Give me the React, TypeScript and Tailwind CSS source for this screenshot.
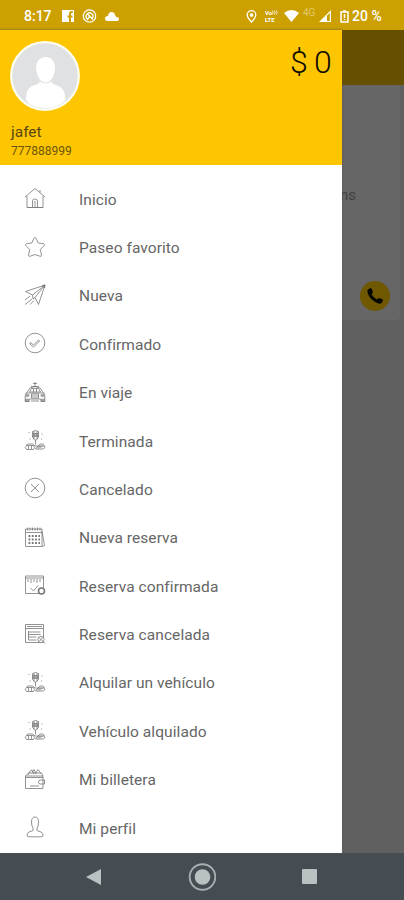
import type { ReactNode } from "react";

const home = (
  <>
    <path d="M1 10 11 1.5 21 10M3 9v11.5h16V9M8.500 20v-6q0-2 2.500-2t2.500 2v6M11 14v6" />
    <path d="M16 3v2.500M3 20.500h16" />
  </>
);
const star = (
  <path d="M11 1.5q.8 0 1.300 1.200L14.200 7l5.400.7q1.800.6.6 1.900l-3.900 3.900 1.200 5.700q-.1 1.700-1.700 1L11 18.500l-4.800 1.700q-1.600.7-1.700-1l1.200-5.700-3.900-3.900Q.6 8.300 2.400 7.700L7.800 7l1.900-4.300Q10.200 1.500 11 1.500z" />
);
const plane = (
  <>
    <path d="M21 1 1.500 7.500 8.500 11 21 1 14.500 20.500 11 13.500 21 1M8.500 11l.5 4 2-1.500M1 16l5-4M1 20.500l7-5.500M6 20.500l4-4" />
    <path d="M18.500 1.500 21 1l-.5 3z" fill="currentColor" />
  </>
);
const confirmed = (
  <>
    <circle cx="11" cy="11" r="9.800" />
    <path d="m6.500 10.500 3 2.500 5-5 1.200 1-6.200 6L5.800 12z" />
  </>
);
const taxi = (
  <>
    <path d="M11 1v4M9 2.500h4M7 5.500h8M2.500 12 6 7q5-3 10 0l3.500 5M5.500 11h11l-2-3.500h-7zM2 12h18l.8 3v5.500h-4V18H5.200v2.500h-4V15zM7.500 13h7v4h-7zM7.500 15h7M9.500 8v3M12.500 8v3M7 20h8" />
    <path d="M2 13.500h3v2H2zM17 13.500h3v2h-3zM1.500 18h3v2.500h-3zM17.500 18h3v2.500h-3z" fill="currentColor" opacity=".65" />
  </>
);
const trip = (
  <>
    <path d="M8.500 2.500q3-2 6 0V8l-2 3h-2l-2-3zM8.500 4.500h6M8.500 7h6M10 2v8M13 2v8M11.500 11v4.500M4.500 3.500h1M17.500 5h1M5.500 10h1M17 10h1M2 16.500 4 15h4.500l2.500 2h3l2-2h3l1.500 2M2.500 16.500h7q2 2 0 4h-7q-2.500-2 0-4zM11.500 20l2.500-3h6l1 1.500-2 1.500zM4.500 17v3M7.500 17v3" />
    <path d="M9 4.500h5v3H9zM14.500 17h4l-2 2h-3z" fill="currentColor" opacity=".5" />
  </>
);
const cancelled = (
  <>
    <circle cx="11" cy="11" r="9.800" />
    <path d="m7 7 8 8M15 7l-8 8" />
  </>
);
const calendar = (
  <>
    <path d="M1.500 3h16.500v17.500H1.500zM1.500 6.500H18M3.500 1.500v3M6 1.500v3M8.500 1.500v3M11 1.500v3M13.500 1.500v3M16 1.500v3M18 5l2.500 14.500-2.500 1" />
    <path d="M4.500 10h11.500M4.500 13.500h11.500M4.500 17h11.500" strokeWidth="1.800" strokeDasharray="1.800 1.500" />
  </>
);
const booked = (
  <>
    <path d="M1.500 2h18v17.500h-18zM1.500 4h18M4 5v3M7 5v4M10 5v3M13 5v4M16 5v3M6.500 14l3 3 4.500-5.500" />
    <circle cx="17.500" cy="17" r="3" strokeWidth="1.600" fill="white" />
  </>
);
const bookingCancelled = (
  <>
    <path d="M1.500 1.500h18v18h-18zM1.500 5.500h18M3 3.500h15M4.500 9h12M4.500 11.500h12M4.500 14h8M4.500 17h8M4.500 8v9" />
    <circle cx="17" cy="16.500" r="3.200" fill="white" />
    <path d="m15 14.500 6 6M19 14.500l-4 4" />
  </>
);
const wallet = (
  <path d="M1.500 8H19v12.500H1.500zM1.500 8 4.500 5h13L19 8M4 7l2-4 2-1 2 4M8 5l2-3.500 2 4M11 6l3-4.500 3 4M1.500 9.500H19M20.500 12h-4q-2 0-2 2t2 2h4zM6 18h9" />
);
const profile = (
  <path d="M7.500 6Q7.500 1 11 1t3.500 5-1.500 6v2.500l4 1.500Q19 17 19 19q0 1.800-2 1.800H5Q3 20.800 3 19q0-2 2-3l4-1.500V12Q7.500 10 7.500 6z" />
);

const items: { label: string; icon: ReactNode }[] = [
  { label: "Inicio", icon: home },
  { label: "Paseo favorito", icon: star },
  { label: "Nueva", icon: plane },
  { label: "Confirmado", icon: confirmed },
  { label: "En viaje", icon: taxi },
  { label: "Terminada", icon: trip },
  { label: "Cancelado", icon: cancelled },
  { label: "Nueva reserva", icon: calendar },
  { label: "Reserva confirmada", icon: booked },
  { label: "Reserva cancelada", icon: bookingCancelled },
  { label: "Alquilar un vehículo", icon: trip },
  { label: "Vehículo alquilado", icon: trip },
  { label: "Mi billetera", icon: wallet },
  { label: "Mi perfil", icon: profile },
];

function StatusBar() {
  return (
    <header className="flex h-[30px] shrink-0 items-center bg-[#cca000] pl-6 pr-5 pt-[2px] text-white">
      <span className="w-[38px] text-[14px] font-medium leading-none">8:17</span>
      <svg className="h-3 w-3" viewBox="0 0 12 12">
        <path fill="white" fillRule="evenodd" d="M0 0h12v12H9V7.500h1.500v-2H9V4q0-1 1-1h.8V1H9Q7 1 7 3.500v2H5.500v2H7V12H0z" />
      </svg>
      <svg className="ml-[8px] h-[14px] w-[15px]" viewBox="0 0 15 14" fill="none" stroke="white" strokeWidth="1.300">
        <circle cx="7.500" cy="7" r="6.200" />
        <path d="M5.500 10A3.400 3.400 0 1 1 10.500 9M5.500 5l5.500 5.500M7.500 7.500 5 11" />
      </svg>
      <svg className="ml-2 h-[9px] w-[14px]" viewBox="0 0 14 9">
        <path fill="white" d="M3 9Q0 9 0 6.500T3 4Q3.500 0 6.500 0T10 3q1 1 1 2 3 0 3 2t-2 2z" />
      </svg>
      <svg className="ml-auto h-[13px] w-[11px]" viewBox="0 0 11 13" fill="none" stroke="white" strokeWidth="1.300">
        <path d="M5.500 12Q1.200 7.700 1.200 5a4.300 4.300 0 0 1 8.600 0Q9.800 7.700 5.500 12z" />
        <circle cx="5.500" cy="5" r="1.200" fill="white" />
      </svg>
      <span className="ml-[8px] flex w-[14px] flex-col text-[6px] font-bold leading-[7px]">
        <span className="flex items-center">
          Vo
          <svg className="h-[5px] w-[6px]" viewBox="0 0 6 5" fill="none" stroke="white" strokeWidth=".8">
            <path d="M.5.500q1 2 0 4M2.500.500q1 2 0 4M4.500.500q1 2 0 4" />
          </svg>
        </span>
        <span>LTE</span>
      </span>
      <svg className="ml-[5px] h-[12px] w-[15px]" viewBox="0 0 15 12">
        <path fill="white" d="M0 3q7.500-6 15 0L7.500 12z" />
      </svg>
      <span className="ml-1 w-[14px] -translate-y-[3px] text-[10px] leading-none text-white/45">4G</span>
      <svg className="ml-[2px] h-3 w-3" viewBox="0 0 12 12">
        <path fill="white" fillRule="evenodd" d="M12 0v12H0zM8 5.500V11h2.800V3z" />
      </svg>
      <svg className="ml-[9px] h-[13px] w-[9px]" viewBox="0 0 9 13" fill="none" stroke="white" strokeWidth="1.500">
        <path d="M1 2h7v10H1zM3 1h3M4.500 4v4M4.500 9v1" />
      </svg>
      <span className="ml-[3px] w-[32px] whitespace-nowrap text-[14px] font-medium leading-none">20 %</span>
    </header>
  );
}

function ProfileHeader() {
  return (
    <section className="flex h-[135px] shrink-0 justify-between bg-[#fec601] pl-[10px] pr-[11px]">
      <div className="flex flex-col pt-[11px]">
        <svg className="h-[70px] w-[70px]" viewBox="0 0 70 70">
          <circle cx="35" cy="35" r="33.800" fill="#e0e1e3" stroke="#fffcf0" strokeWidth="2.200" />
          <path
            fill="white"
            d="M35.500 16c6.500 0 10 5 9.500 12-.3 6.500-4 13.500-9.500 13.500S26.800 34.500 26.200 28c-.5-7 3-12 9.300-12zM16 59c0-9 2-13 9-15 4-1 4-2.500 5-3.500q5.500 4 11 0c1 2 3 3 6 4 6 2 8 6 8.500 14Q49 67 35 67T16 59z"
          />
        </svg>
        <p className="mt-3 pl-[1px] text-[15.500px] leading-[18px] text-[#59470f]">jafet</p>
        <p className="mt-[3px] pl-[1px] text-[12px] leading-[14px] text-[#6b550b]">777888999</p>
      </div>
      <p className="pt-[13px] text-[32px] font-light leading-[38px] tracking-[-0.800px] text-[#100d05]">$ 0</p>
    </section>
  );
}

export default function App() {
  return (
    <div className="flex h-[900px] w-[404px] flex-col overflow-hidden bg-[#606060] font-[Roboto,sans-serif]">
      <StatusBar />
      <main className="flex min-h-0 flex-1">
        <aside className="z-10 flex w-[342px] shrink-0 flex-col bg-white shadow-[0_0_2px_#555]">
          <ProfileHeader />
          <nav className="pt-[9px]">
            {items.map(({ label, icon }) => (
              <a key={label} className="flex h-[48.380px] items-center pl-6">
                <svg
                  className="h-[22px] w-[22px] shrink-0 text-[#777]"
                  viewBox="0 0 22 22"
                  fill="none"
                  stroke="currentColor"
                  strokeWidth=".8"
                  strokeLinejoin="round"
                >
                  {icon}
                </svg>
                <span className="ml-[33px] pt-[3px] text-[15.500px] leading-5 tracking-[0.070px] whitespace-nowrap text-[#666]">
                  {label}
                </span>
              </a>
            ))}
          </nav>
        </aside>
        <div className="flex min-w-0 flex-1 flex-col bg-[#606060]">
          <div className="h-[55px] shrink-0 bg-[#664f00]" />
          <section className="mr-1 flex h-[235px] flex-col justify-between rounded-br-sm bg-[#666] pb-[9px] pt-[100px]">
            <span className="-ml-[2px] text-[15px] leading-5 text-[#414141]">ns</span>
            <span className="mr-[10px] flex h-[30px] w-[30px] items-center justify-center self-end rounded-full bg-[#705800]">
              <svg className="h-4 w-4" viewBox="0 0 16 16">
                <path
                  fill="#050500"
                  d="M1 1.500 3.500 0q1 0 1.500 1.500l1 3L4.500 6q1.500 3.500 5.500 5.500l1.500-1.500 3.500 1q1 .5 1 1.500L14.500 15q-1 1-3 .5Q2.500 12 .5 4.500 0 2.500 1 1.500z"
                />
              </svg>
            </span>
          </section>
        </div>
      </main>
      <footer className="flex h-[47px] shrink-0 items-center bg-[#454d52] pl-[86px]">
        <svg className="h-4 w-4" viewBox="0 0 16 16">
          <path fill="#b9c1c2" d="M0 8 15 0v16z" />
        </svg>
        <svg className="ml-[86px] h-7 w-7" viewBox="0 0 28 28">
          <circle cx="14.500" cy="14" r="12.800" fill="none" stroke="#a7b0b2" strokeWidth="1.900" />
          <circle cx="14.500" cy="14" r="7.800" fill="#b9c1c2" />
        </svg>
        <span className="ml-[86px] h-[15px] w-[15px] rounded-[1px] bg-[#b9c1c2]" />
      </footer>
    </div>
  );
}
